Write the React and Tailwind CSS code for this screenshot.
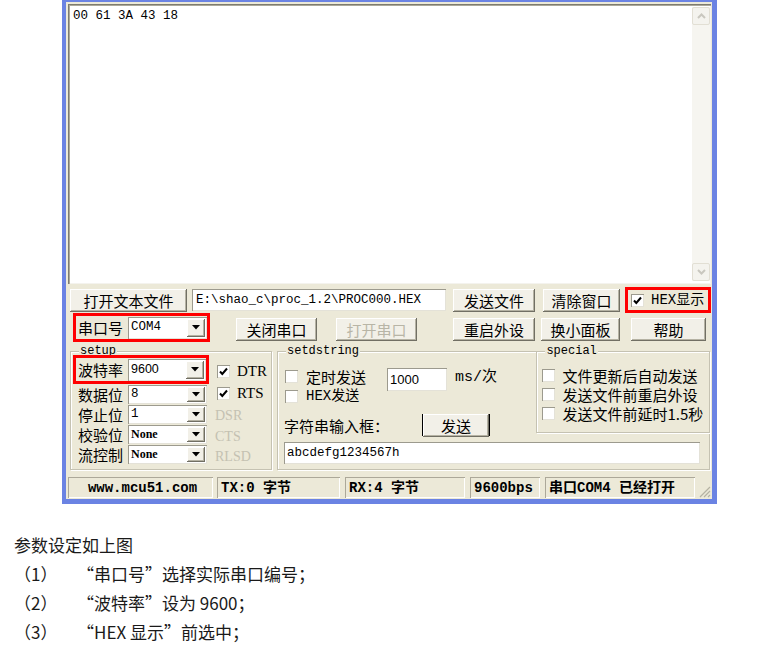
import React from 'react';

const mono = "font-['Liberation_Mono','Noto_Sans_CJK_SC',monospace]";
const cjk = "font-['Noto_Sans_CJK_SC',sans-serif]";
const serif = "font-['Liberation_Serif','Noto_Sans_CJK_SC',serif]";

const raised =
  'bg-[#f2f0e8] shadow-[inset_-1px_-1px_0_#716f64,inset_1px_1px_0_#ffffff,inset_-2px_-2px_0_#b5b2a3]';
const field = 'bg-white shadow-[inset_1px_1px_0_#9c9a8e,inset_-1px_-1px_0_#e4e2d8]';

function Btn({ className = '', disabled, children }) {
  return (
    <div
      className={`flex h-[23px] items-center justify-center text-[15px] leading-none ${cjk} ${raised} ${
        disabled ? 'text-[#b8b5a6]' : 'text-black'
      } ${className}`}
    >
      {children}
    </div>
  );
}

function Arrow() {
  return (
    <svg width="8" height="5" viewBox="0 0 8 5">
      <path d="M0 0h8L4 4.5z" fill="#000" />
    </svg>
  );
}

function Combo({ value, className = '', textClass = '' }) {
  return (
    <div className={`flex ${field} ${className}`}>
      <span className={`flex flex-1 items-center pl-[3px] text-[12.5px] leading-none ${mono} ${textClass}`}>
        {value}
      </span>
      <span className={`my-[2px] mr-[2px] flex w-[18px] items-center justify-center ${raised}`}>
        <Arrow />
      </span>
    </div>
  );
}

function Check({ checked }) {
  return (
    <span className="flex h-[13px] w-[13px] shrink-0 items-center justify-center bg-white shadow-[inset_1px_1px_0_#9c9a8e,inset_-1px_-1px_0_#e4e2d8]">
      {checked && (
        <svg width="9" height="9" viewBox="0 0 9 9">
          <path d="M1 4.5l2.3 2.5L8 1.5" fill="none" stroke="#000" strokeWidth="2" />
        </svg>
      )}
    </span>
  );
}

function Frame({ label, className = '', children }) {
  return (
    <div className={`relative border border-[#c5c2b2] shadow-[inset_1px_1px_0_#ffffff,1px_1px_0_#ffffff] ${className}`}>
      <span className={`absolute -top-[8px] left-[8px] bg-[#ece9d8] px-[1px] text-[12px] leading-[14px] ${mono}`}>
        {label}
      </span>
      {children}
    </div>
  );
}

function Panel({ className = '', children }) {
  return (
    <div
      className={`flex h-[21px] items-center text-[14px] font-bold leading-none shadow-[inset_1px_1px_0_#aca899,inset_-1px_-1px_0_#ffffff] ${mono} ${className}`}
    >
      {children}
    </div>
  );
}

export default function App() {
  return (
    <div className="h-[648px] w-[777px] overflow-hidden bg-white">
      <div className="ml-[62px] w-[655px] border-b-[5px] border-l-4 border-r-[5px] border-t-2 border-[#6b83e3] bg-[#ece9d8] text-black">
        {/* receive area */}
        <div className="ml-[2px] mt-[2px] flex h-[280px] w-[643px] bg-white shadow-[inset_1px_1px_0_#7d7b70,inset_2px_2px_0_#aca899,inset_-1px_-1px_0_#f4f3ee]">
          <div className={`flex-1 pl-[5px] pt-[6px] text-[12.5px] leading-none ${mono}`}>00 61 3A 43 18</div>
          <div className="my-[3px] mr-[1px] flex w-[18px] flex-col justify-between bg-[#f6f5f0]">
            <span className="flex h-[18px] items-center justify-center rounded-[2px] border border-[#e2dfd4] bg-[#f4f3ee]">
              <svg width="9" height="6" viewBox="0 0 9 6">
                <path d="M1 5l3.5-3.5L8 5" fill="none" stroke="#c9c7bf" strokeWidth="2" />
              </svg>
            </span>
            <span className="flex h-[18px] items-center justify-center rounded-[2px] border border-[#e2dfd4] bg-[#f4f3ee]">
              <svg width="9" height="6" viewBox="0 0 9 6">
                <path d="M1 1l3.5 3.5L8 1" fill="none" stroke="#c9c7bf" strokeWidth="2" />
              </svg>
            </span>
          </div>
        </div>

        {/* row 1 */}
        <div className="mt-[3px] flex h-[26px] items-center pl-[4px]">
          <Btn className="w-[117px]">打开文本文件</Btn>
          <div className={`ml-[5px] flex h-[22px] w-[254px] items-center pl-[4px] text-[12.5px] ${field} ${mono}`}>
            E:\shao_c\proc_1.2\PROC000.HEX
          </div>
          <Btn className="ml-[7px] w-[82px]">发送文件</Btn>
          <Btn className="ml-[8px] w-[77px]">清除窗口</Btn>
          <div className="ml-[5px] flex h-[26px] w-[86px] items-center border-[3px] border-[#ff0000] pl-[3px]">
            <Check checked />
            <span className={`ml-[7px] text-[14px] leading-none ${mono}`}>HEX显示</span>
          </div>
        </div>

        {/* row 2 */}
        <div className="flex h-[29px] items-start pl-[7px]">
          <div className="flex h-[29px] w-[137px] items-center border-[3px] border-[#ff0000] pl-[2px]">
            <span className={`w-[50px] text-[15px] leading-none ${cjk}`}>串口号</span>
            <Combo value="COM4" className="h-[22px] w-[79px]" />
          </div>
          <Btn className="ml-[26px] mt-[5px] h-[22px] w-[81px]">关闭串口</Btn>
          <Btn disabled className="ml-[19px] mt-[5px] h-[22px] w-[81px]">
            打开串口
          </Btn>
          <Btn className="ml-[36px] mt-[5px] h-[22px] w-[82px]">重启外设</Btn>
          <Btn className="ml-[6px] mt-[5px] h-[22px] w-[79px]">换小面板</Btn>
          <Btn className="ml-[11px] mt-[5px] h-[22px] w-[75px]">帮助</Btn>
        </div>

        {/* groups */}
        <div className="mt-[9px] flex pl-[4px]">
          <Frame label="setup" className="h-[119px] w-[202px]">
            <div className="flex pl-[2px] pt-[3px]">
              <div className="w-[136px]">
                <div className="relative z-10 flex h-[29px] w-[136px] items-center border-[3px] border-[#ff0000] pl-[2px]">
                  <span className={`w-[50px] text-[15px] leading-none ${cjk}`}>波特率</span>
                  <Combo value="9600" className="h-[22px] w-[78px]" textClass="font-['Liberation_Sans',sans-serif]" />
                </div>
                {[
                  ['数据位', '8'],
                  ['停止位', '1'],
                  ['校验位', 'None'],
                  ['流控制', 'None'],
                ].map(([label, value]) => (
                  <div key={label} className="flex h-[20px] items-center pl-[5px]">
                    <span className={`w-[50px] text-[15px] leading-none ${cjk}`}>{label}</span>
                    <Combo
                      value={value}
                      className="h-[19px] w-[79px]"
                      textClass={value === 'None' ? "font-['Liberation_Serif',serif] font-bold text-[12px]" : ''}
                    />
                  </div>
                ))}
              </div>
              <div className={`ml-[6px] flex flex-col text-[15px] leading-none ${serif}`}>
                <div className="mt-[5px] flex h-[22px] items-center pl-[2px]">
                  <Check checked />
                  <span className="ml-[7px]">DTR</span>
                </div>
                <div className="flex h-[22px] items-center pl-[2px]">
                  <Check checked />
                  <span className="ml-[7px]">RTS</span>
                </div>
                <div className="flex h-[24px] items-center text-[14px] text-[#c4c1b2]">DSR</div>
                <div className="flex h-[18px] items-center text-[14px] text-[#c4c1b2]">CTS</div>
                <div className="flex h-[22px] items-center text-[14px] text-[#c4c1b2]">RLSD</div>
              </div>
            </div>
          </Frame>

          <Frame label="setdstring" className="ml-[5px] flex h-[119px] w-[433px] flex-col">
            <div className="flex">
              <div className="w-[259px] pt-[14px]">
                <div className="flex">
                  <div className={`w-[109px] pl-[7px] text-[15px] leading-none ${cjk}`}>
                    <div className="flex h-[20px] items-center">
                      <Check />
                      <span className="ml-[8px]">定时发送</span>
                    </div>
                    <div className="flex h-[20px] items-center">
                      <Check />
                      <span className={`ml-[8px] ${mono} text-[14px]`}>HEX发送</span>
                    </div>
                  </div>
                  <div className={`mt-[2px] flex h-[23px] w-[60px] items-center pl-[3px] text-[13px] ${field} font-['Liberation_Sans',sans-serif]`}>
                    1000
                  </div>
                  <span className={`ml-[8px] mt-[4px] text-[15px] leading-none ${mono}`}>ms/次</span>
                </div>
                <div className="mt-[8px] flex h-[22px] items-center pl-[6px]">
                  <span className={`w-[138px] text-[15px] leading-none ${cjk}`}>字符串输入框：</span>
                  <div className="flex h-[22px] w-[68px] items-center justify-center border border-black">
                    <Btn className="h-[20px] w-[66px]">发送</Btn>
                  </div>
                </div>
              </div>
              <Frame label="special" className="-mr-px -mt-px h-[82px] w-[174px]">
                <div className={`pl-[5px] pt-[14px] text-[15px] leading-none ${cjk}`}>
                  {['文件更新后自动发送', '发送文件前重启外设', '发送文件前延时1.5秒'].map((t) => (
                    <div key={t} className="flex h-[19px] items-center whitespace-nowrap">
                      <Check />
                      <span className="ml-[7px]">{t}</span>
                    </div>
                  ))}
                </div>
              </Frame>
            </div>
            <div className={`ml-[6px] mt-[6px] flex h-[22px] w-[416px] items-center pl-[3px] text-[12.5px] ${field} ${mono}`}>
              abcdefg1234567h
            </div>
          </Frame>
        </div>

        {/* status bar */}
        <div className="mb-px mt-[7px] flex items-center pl-[2px]">
          <Panel className="w-[145px] justify-center pl-[4px]">www.mcu51.com</Panel>
          <Panel className="ml-[4px] w-[123px] pl-[4px]">TX:0 字节</Panel>
          <Panel className="ml-[5px] w-[120px] pl-[4px]">RX:4 字节</Panel>
          <Panel className="ml-[5px] w-[70px] pl-[4px]">9600bps</Panel>
          <Panel className="ml-[5px] w-[150px] pl-[4px]">串口COM4 已经打开</Panel>
          <div className="ml-[2px] flex h-[21px] w-[14px] items-end justify-end">
            <svg width="12" height="12" viewBox="0 0 12 12">
              <path d="M11 1L1 11M11 5L5 11M11 9L9 11" stroke="#b5b2a3" strokeWidth="1.2" />
            </svg>
          </div>
        </div>
      </div>

      {/* notes */}
      <div className={`ml-[14px] mt-[26px] text-[17px] leading-[29px] text-[#1a1a1a] ${cjk}`}>
        <div>参数设定如上图</div>
        {[
          ['（1）', '“串口号”选择实际串口编号；'],
          ['（2）', '“波特率”设为 9600；'],
          ['（3）', '“HEX 显示”前选中；'],
        ].map(([n, t]) => (
          <div key={n} className="flex">
            <span className="w-[63px]">{n}</span>
            <span>{t}</span>
          </div>
        ))}
      </div>
    </div>
  );
}
